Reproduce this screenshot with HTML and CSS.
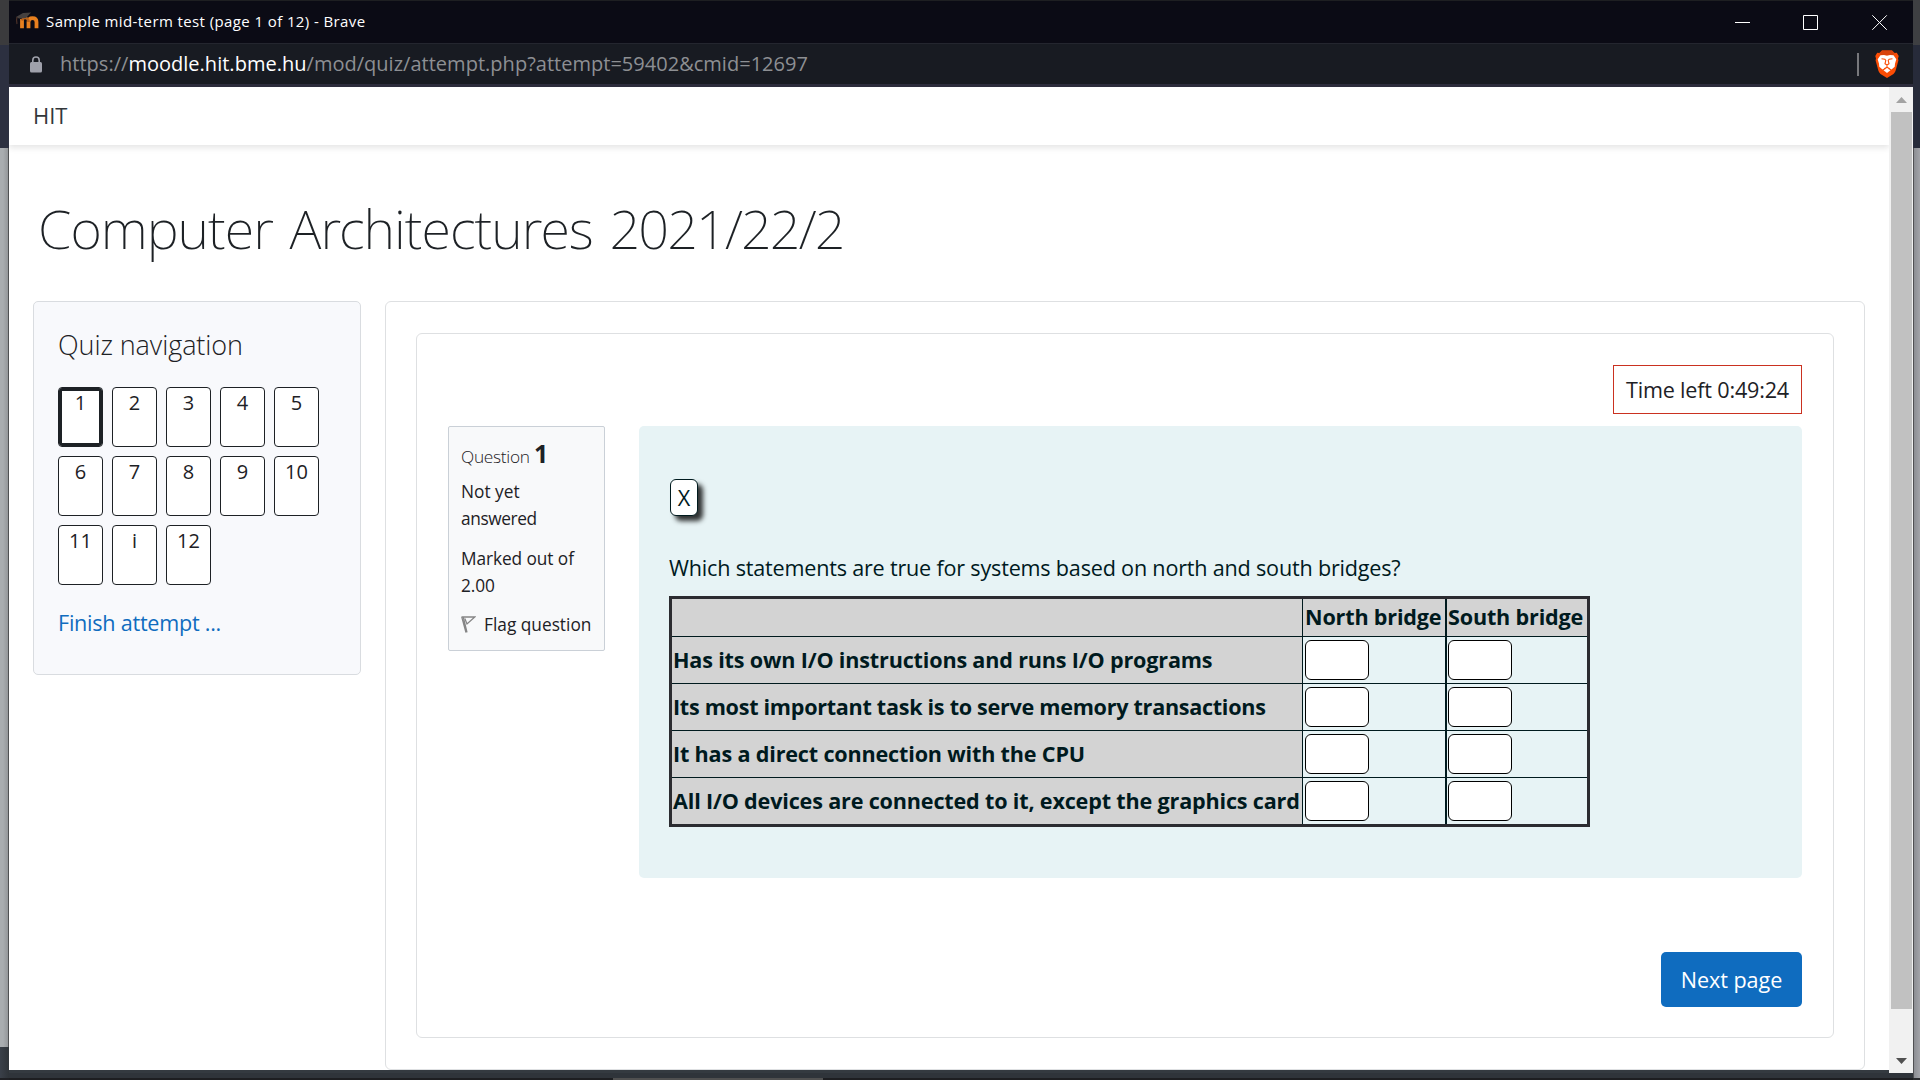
FILE: index.html
```html
<!DOCTYPE html>
<html lang="en">
<head>
<meta charset="utf-8">
<title>Sample mid-term test (page 1 of 12)</title>
<link rel="stylesheet" href="styles.css">
</head>
<body>
<div class="desktop">
  <div class="edge edge-left"></div>
  <div class="window">
    <header class="titlebar">
      <svg class="favicon" width="25" height="18" viewBox="0 0 25 18">
        <path d="M7 16.300V7M13.500 16.300V10q0-3.800 4-3.800t4 3.800v6.300" fill="none" stroke="#e8801f" stroke-width="3.800"/>
        <path d="M7 8.500q1-2.500 3-2.500 3.500 0 3.500 4" fill="none" stroke="#b5601c" stroke-width="2.600"/>
        <path d="M1 5 8 1l8-.5-5 5.500-7 .5z" fill="#45403f"/>
        <path d="M2 5q-1 3 0 7" fill="none" stroke="#4a3028" stroke-width="1.200"/>
      </svg>
      <span class="window-title">Sample mid-term test (page 1 of 12) - Brave</span>
      <svg class="controls" width="154" height="17" viewBox="0 0 154 17" fill="none" stroke="#fff" stroke-width="1">
        <path d="M0 8.500h15M68.500 1.500h14v14h-14z"/>
        <path d="m137.300 1.300 14.500 14.500m0-14.500-14.500 14.500"/>
      </svg>
    </header>
    <div class="addressbar">
      <svg class="lock" width="12" height="17" viewBox="0 0 12 17">
        <rect y="6" width="12" height="10.500" rx="1.500" fill="#9fa1ab"/>
        <path d="M2.800 7V4.200a3.200 3.200 0 0 1 6.400 0V7" fill="none" stroke="#9fa1ab" stroke-width="1.600"/>
      </svg>
      <span class="url">https://<b>moodle.hit.bme.hu</b>/mod/quiz/attempt.php?attempt=59402&amp;cmid=12697</span>
      <span class="divider"></span>
      <svg class="brave" width="24" height="28" viewBox="0 0 24 28">
        <path d="M7 .5h10l2.500 2.500 2.300-.3L23.700 6l-.7 2.500.4 2L20.500 21q-.6 1.800-2 2.900L12 28l-6.500-4.100q-1.400-1.100-2-2.900L.6 10.500l.4-2L.3 6l1.900-3.300 2.300.3z" fill="#fb4d05"/>
        <path d="M7 .5h10l2.500 2.500-1 2h-13l-1-2z" fill="#d9430b"/>
        <path d="M5.500 5.300 9 5l3 .8L15 5l3.500.3 2.800 4-1.300 4.500-.3 3-3.200 2.700-2.500-1.500-2 1.500-2-1.500-2.500 1.500-3.200-2.700-.3-3-1.300-4.500z" fill="#fff"/>
        <path d="m8.500 20.200 3.500-1.900 3.500 1.900-3.500 2.700z" fill="#fff"/>
        <path d="m6.500 8.700 3.300.5 1 1.300-.8 3.300 2 1.200 2-1.200-.8-3.300 1-1.300 3.300-.5M12 15v2.300l-2.800 1.500M12 17.300l2.800 1.500" fill="none" stroke="#fb4d05" stroke-width="1.100"/>
      </svg>
    </div>
    <div class="viewport">
      <div class="page">
        <nav class="navbar">HIT</nav>
        <h1 class="course">Computer Architectures <span class="term">2021/22/2</span></h1>
        <div class="columns">
          <aside class="quiz-nav">
            <h2 class="quiz-nav-title">Quiz navigation</h2>
            <div class="pages">
              <span class="pg current">1</span><span class="pg">2</span><span class="pg">3</span><span class="pg">4</span><span class="pg">5</span>
              <span class="pg">6</span><span class="pg">7</span><span class="pg">8</span><span class="pg">9</span><span class="pg">10</span>
              <span class="pg">11</span><span class="pg">i</span><span class="pg">12</span>
            </div>
            <a class="finish">Finish attempt ...</a>
          </aside>
          <main class="region">
            <div class="card">
              <div class="timer">Time left 0:49:24</div>
              <div class="question">
                <div class="info">
                  <div class="qno">Question <b>1</b></div>
                  <div class="state">Not yet<br><span class="tight">answered</span></div>
                  <div class="grade">Marked out of<br>2.00</div>
                  <div class="flag">
                    <svg width="15" height="17" viewBox="0 0 15 17" fill="none" stroke="#858585" stroke-width="1.300"><path d="M.8 1.200 5 16.500M2.300 1.200 6 16.300" /><path d="M.5 1h13.300L6 8 3.800 2.500"/></svg>
                    <span>Flag question</span>
                  </div>
                </div>
                <div class="formulation">
                  <span class="chip">X</span>
                  <p class="prompt">Which statements are true for systems based on north and south bridges?</p>
                  <div class="grid">
                    <div class="cell head top"></div><div class="cell head top north">North bridge</div><div class="cell head top south">South bridge</div>
                    <div class="cell head">Has its own I/O instructions and runs I/O programs</div><div class="cell north"><i class="drop"></i></div><div class="cell south"><i class="drop"></i></div>
                    <div class="cell head snug">Its most important task is to serve memory transactions</div><div class="cell north"><i class="drop"></i></div><div class="cell south"><i class="drop"></i></div>
                    <div class="cell head">It has a direct connection with the CPU</div><div class="cell north"><i class="drop"></i></div><div class="cell south"><i class="drop"></i></div>
                    <div class="cell head last">All I/O devices are connected to it, except the graphics card</div><div class="cell north last"><i class="drop"></i></div><div class="cell south last"><i class="drop"></i></div>
                  </div>
                </div>
              </div>
              <div class="next">Next page</div>
            </div>
          </main>
        </div>
      </div>
      <div class="scrollbar">
        <svg width="11" height="6" viewBox="0 0 11 6"><path d="M0 6 5.500 0 11 6z" fill="#a3a3a3"/></svg>
        <div class="thumb"></div>
        <svg width="11" height="6" viewBox="0 0 11 6"><path d="M0 0h11L5.500 6z" fill="#505050"/></svg>
      </div>
    </div>
    <footer class="behind"><span class="task"></span></footer>
  </div>
  <div class="edge edge-right"></div>
</div>
</body>
</html>
```
FILE: styles.css
```css
* { box-sizing: border-box; }
body { margin: 0; background: #343a40; font-family: "Open Sans", "Noto Sans", sans-serif; color: #1d2125; overflow: hidden; }
h1, h2, p { margin: 0; }

.desktop { display: grid; grid-template-columns: 9px 1904px 7px; height: 1080px; }
.edge-left { background:
  linear-gradient(#3b3b3d, #3b3b3d) 0 0 / 9px 45px no-repeat,
  linear-gradient(#2c3040, #2c3040) 0 45px / 9px 103px no-repeat,
  linear-gradient(90deg, #a9adb0 0 3px, #94979a 8px, #4f5153 8px) 0 148px / 9px 899px no-repeat,
  linear-gradient(#1f2024, #1f2024) 0 1078px / 9px 2px no-repeat,
  linear-gradient(90deg, #3a4049, #2e3338); }
.edge-right { background:
  linear-gradient(#3e3f42, #3e3f42) 0 0 / 7px 45px no-repeat,
  linear-gradient(#272b3a, #272b3a) 0 45px / 7px 103px no-repeat,
  linear-gradient(90deg, #505053 0 1px, #8c8e93 1px, #a3a4a9 7px) 0 148px / 7px 930px no-repeat,
  #2a2b2e; }
.window { display: flex; flex-direction: column; }

.titlebar { display: flex; align-items: center; height: 43px; background: #0b0b15; border-top: 1px solid #1e1f22; padding: 0 24px 0 6px; }
.favicon { margin-top: -2px; }
.window-title { flex: 1; margin: -2px 0 0 6px; color: #fff; font-size: 15px; line-height: 40px; letter-spacing: .4px; }
.controls { margin-top: 1px; }
.addressbar { display: flex; align-items: center; height: 44px; background: #181b22; border-top: 1px solid #24262f; border-bottom: 3px solid #2c2c3c; padding: 0 14px 0 21px; }
.url { flex: 1; margin-left: 18px; color: #8d8f93; font-size: 20px; line-height: 40px; letter-spacing: .02px; }
.url b { font-weight: 400; color: #fff; }
.divider { width: 2px; height: 23px; background: #77787c; margin-right: 16px; }

.viewport { display: flex; height: 986px; }
.page { width: 1880px; height: 983px; background: #fff; overflow: hidden; }
.navbar { height: 58px; padding-left: 24px; line-height: 57px; font-size: 22px; color: #33373b; box-shadow: 0 3px 6px rgba(0, 0, 0, .1); }
.course { padding: 49px 0 39px 29px; font: 200 54px/68px "Noto Sans", sans-serif; letter-spacing: -.98px; word-spacing: 3.500px; }
.term { letter-spacing: -1.900px; }
.columns { display: grid; grid-template-columns: 328px 1480px; column-gap: 24px; align-items: start; padding-left: 24px; }

.quiz-nav { height: 374px; padding: 26px 24px; background: #f8f9fc; border: 1px solid #d9dce0; border-radius: 5px; }
.quiz-nav-title { font-size: 27px; font-weight: 300; line-height: 34px; margin-bottom: 25px; letter-spacing: -.08px; }
.pages { display: grid; grid-template-columns: repeat(5, 45px); grid-auto-rows: 60px; gap: 9px; }
.pg { background: #fff; border: 1px solid #1d2125; border-radius: 4px; text-align: center; font-size: 20px; line-height: 30px; }
.current { box-shadow: inset 0 0 0 3px #1d2125; }
.finish { display: block; margin-top: 20px; color: #0f6cbf; font-size: 21.600px; line-height: 35px; letter-spacing: -.25px; }

.region { height: 769px; padding: 31px 30px; border: 1px solid #dee0e2; border-radius: 6px; }
.card { display: flex; flex-direction: column; height: 705px; padding: 31px; border: 1px solid #dee0e2; border-radius: 6px; }
.timer { align-self: flex-end; width: 189px; height: 49px; border: 1px solid #ca3120; text-align: center; font-size: 21.600px; line-height: 48px; letter-spacing: -.2px; }
.question { display: flex; gap: 34px; margin-top: 12px; }
.info { width: 157px; height: 225px; padding: 16px 0 0 12px; background: #f8f9fa; border: 1px solid #cad0d7; border-radius: 2px; font-size: 17.300px; line-height: 27px; white-space: nowrap; }
.qno { font-weight: 300; letter-spacing: -.28px; margin-bottom: 8px; }
.qno b { font-size: 25px; font-weight: 700; line-height: 0; }
.tight { letter-spacing: -.4px; }
.state { margin-bottom: 13px; }
.grade { margin-bottom: 12px; letter-spacing: -.08px; }
.flag { display: flex; align-items: center; }
.flag span { margin-left: 8px; }

.formulation { width: 1163px; height: 452px; padding: 53px 30px; background: #e7f3f5; border-radius: 5px; color: #001a1e; }
.chip { display: block; width: 28px; height: 37px; margin-left: 1px; border: 1px solid #001a1e; border-radius: 6px; background: #fff; box-shadow: 5px 5px 5px #000c; text-align: center; font-size: 21.600px; line-height: 35px; }
.prompt { margin: 35px 0 11px; font-size: 21.600px; line-height: 34px; letter-spacing: -.2px; white-space: nowrap; }
.grid { display: grid; grid-template-columns: 631px 144px 140px; grid-template-rows: 38px 47px 47px 47px 46px; width: 921px; border: 3px solid #2b2b30; }
.cell { border: 0 solid #001a1e; border-width: 0 0 1px; padding: 3px 2px; font-size: 21.600px; font-weight: 700; letter-spacing: -.18px; white-space: nowrap; }
.head { background: #d3d3d3; padding: 0 1px; line-height: 46px; border-right-width: 1px; }
.top { line-height: 36px; }
.snug { letter-spacing: -.29px; }
.north { border-right-width: 2px; }
.head.north { padding-left: 2px; }
.south { border-right-width: 0; padding-left: 1px; }
.last { border-bottom-width: 0; }
.drop { display: block; width: 64px; height: 40px; background: #fff; border: 1px solid #000; border-radius: 6px; }
.next { align-self: flex-end; width: 141px; height: 55px; margin-top: 74px; border-radius: 5px; background: #0f6cbf; color: #fff; text-align: center; font-size: 21.600px; line-height: 56px; letter-spacing: -.05px; }

.scrollbar { display: flex; flex-direction: column; align-items: center; width: 24px; background: #f1f1f1; padding-top: 10px; }
.thumb { width: 21px; height: 897px; margin: 9px 0 49px; background: #c1c1c1; }
.behind { display: flex; flex: 1; align-items: flex-end; background: linear-gradient(#2f343a 0 5px, #1d1e21 5px); }
.task { width: 210px; height: 2px; margin-left: 604px; background: #505050; }
```
